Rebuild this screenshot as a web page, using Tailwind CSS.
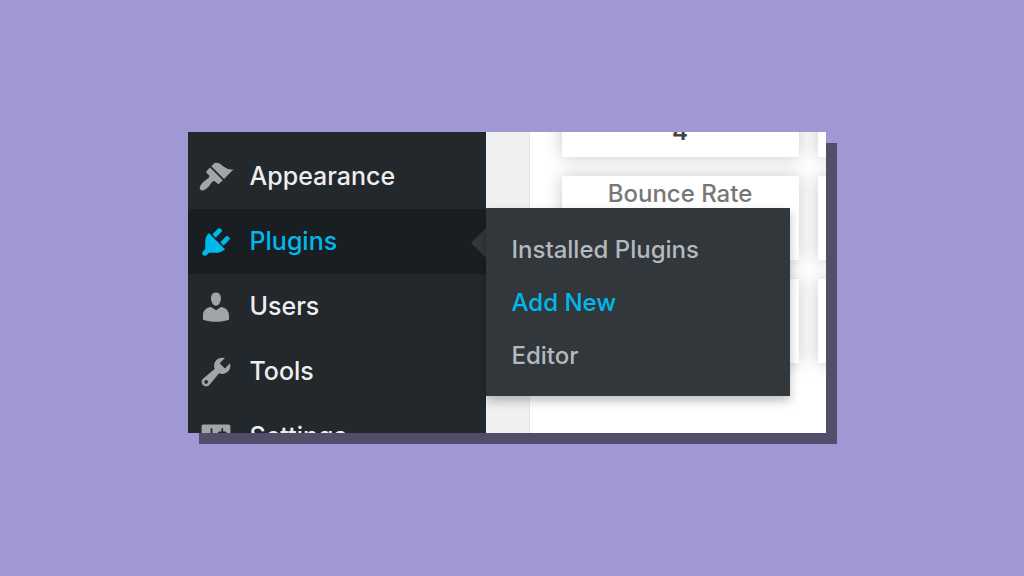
<!DOCTYPE html>
<html lang="en">
<head>
  <meta charset="UTF-8">
  <meta name="viewport" content="width=device-width, initial-scale=1.0">
  <title>Add New Plugin</title>
  <script src="https://cdn.jsdelivr.net/npm/@tailwindcss/browser@4"></script>
</head>
<body class="min-h-screen bg-[#a098d3] font-['Inter','Liberation_Sans',sans-serif] flex items-center justify-center">
  <!-- Cropped admin window with a hard shadow -->
  <div class="w-full max-w-[649px] pr-[11px] pb-[11px]">
    <div class="shadow-[11px_11px_0_#524d69]">
      <div class="flex h-[301px] overflow-hidden bg-[#f0f0f0]">

        <!-- Admin menu -->
        <nav class="relative z-10 w-[298px] shrink-0 bg-[#23282d] pt-3 text-[25px] font-medium text-[#eeeeee]">
          <ul>
            <li>
              <a href="#" class="flex h-[65px] items-center gap-4 pl-[10px]">
                <svg class="size-9 text-[#a0a5aa]" fill="currentColor" viewBox="0 0 20 20"><path d="M14.48 11.06L7.41 3.99l1.5-1.5c.5-.56 2.3-.47 3.51.32 1.21.8 1.43 1.28 2.91 2.1 1.18.64 2.45 1.26 4.45.85zm-.71.71L6.7 4.7 4.93 6.47c-.39.39-.39 1.02 0 1.41l1.06 1.06c.39.39.39 1.03 0 1.42-.6.6-1.43 1.11-2.21 1.69-.35.26-.7.53-1.01.84C1.43 14.23.4 16.08 1.4 17.07c.99 1 2.84-.03 4.18-1.36.31-.31.58-.66.85-1.02.57-.78 1.08-1.61 1.69-2.21.39-.39 1.02-.39 1.41 0l1.06 1.06c.39.39 1.02.39 1.41 0z"/></svg>
                Appearance
              </a>
            </li>
            <li class="relative">
              <a href="#" class="flex h-[65px] items-center gap-4 bg-[#191e23] pl-[10px] text-[#00b9eb]">
                <svg class="size-9" fill="currentColor" viewBox="0 0 20 20"><path d="M13.11 4.36L9.87 7.6 8 5.73l3.24-3.24c.35-.34 1.05-.2 1.56.32.52.51.66 1.21.31 1.55zm-8 1.77l.91-1.12 9.01 9.01-1.19.84c-.71.71-2.63 1.16-3.82 1.16H6.14L4.9 17.26c-.59.59-1.54.59-2.12 0-.59-.58-.59-1.53 0-2.12l1.24-1.24v-3.88c0-1.13.4-3.19 1.09-3.89zm7.26 3.97l3.24-3.24c.34-.35 1.04-.21 1.55.31.52.51.66 1.21.31 1.55l-3.24 3.25z"/></svg>
                Plugins
              </a>
              <svg class="absolute top-[19px] right-0 h-[30px] w-[15px] text-[#32373c]" fill="currentColor" viewBox="0 0 15 30"><path d="M15 0v30L0 15z"/></svg>
              <!-- Flyout -->
              <ul class="absolute -top-px left-full w-[304px] bg-[#32373c] pt-[15px] pb-[14px] text-2xl text-[#b4b9be] shadow-[0_5px_9px_rgba(0,0,0,0.25)]">
                <li><a href="#" class="flex h-[53px] items-center px-[26px]">Installed Plugins</a></li>
                <li><a href="#" class="flex h-[53px] items-center px-[26px] text-[#00b9eb]">Add New</a></li>
                <li><a href="#" class="flex h-[53px] items-center px-[26px]">Editor</a></li>
              </ul>
            </li>
            <li>
              <a href="#" class="flex h-[65px] items-center gap-4 pl-[10px]">
                <svg class="size-9 text-[#a0a5aa]" fill="currentColor" viewBox="0 0 20 20"><path d="M10 9.25c-2.27 0-2.73-3.44-2.73-3.44C7 4.02 7.82 2 9.97 2c2.16 0 2.98 2.02 2.71 3.81 0 0-.41 3.44-2.68 3.44zm0 2.57L12.72 10c2.39 0 4.52 2.33 4.52 4.53v2.49s-3.65 1.13-7.24 1.13c-3.65 0-7.24-1.13-7.24-1.13v-2.49c0-2.25 1.94-4.48 4.47-4.48z"/></svg>
                Users
              </a>
            </li>
            <li>
              <a href="#" class="flex h-[65px] items-center gap-4 pl-[10px]">
                <svg class="size-9 text-[#a0a5aa]" fill="currentColor" viewBox="0 0 20 20"><path d="M16.68 9.77c-1.34 1.34-3.3 1.67-4.95.99l-5.41 6.52c-.99.99-2.59.99-3.58 0s-.99-2.59 0-3.57l6.52-5.42c-.68-1.65-.35-3.61.99-4.95 1.28-1.28 3.12-1.62 4.72-1.06l-2.89 2.89 2.82 2.82 2.86-2.87c.53 1.58.18 3.39-1.08 4.65zM3.81 16.21c.4.39 1.04.39 1.43 0 .4-.4.4-1.04 0-1.43-.39-.4-1.03-.4-1.43 0-.39.39-.39 1.03 0 1.43z"/></svg>
                Tools
              </a>
            </li>
            <li>
              <a href="#" class="flex h-[65px] items-center gap-4 pl-[10px]">
                <svg class="size-9 text-[#a0a5aa]" fill="currentColor" viewBox="0 0 20 20"><path d="M18 16V4c0-.55-.45-1-1-1H3c-.55 0-1 .45-1 1v12c0 .55.45 1 1 1h14c.55 0 1-.45 1-1zM8 11h1c.55 0 1 .45 1 1s-.45 1-1 1H8v1.5c0 .28-.22.5-.5.5s-.5-.22-.5-.5V13H6c-.55 0-1-.45-1-1s.45-1 1-1h1V5.5c0-.28.22-.5.5-.5s.5.22.5.5V11zm5-2h-1c-.55 0-1-.45-1-1s.45-1 1-1h1V5.5c0-.28.22-.5.5-.5s.5.22.5.5V7h1c.55 0 1 .45 1 1s-.45 1-1 1h-1v5.5c0 .28-.22.5-.5.5s-.5-.22-.5-.5V9z"/></svg>
                Settings
              </a>
            </li>
          </ul>
        </nav>

        <!-- Stats widget, scrolled part way -->
        <main class="ml-[43px] min-w-0 flex-1 overflow-hidden border-l border-[#e5e5e5] bg-white pl-8">
          <div class="-mt-[59px] grid grid-cols-[237px_237px] gap-[19px] text-center text-2xl font-medium text-[#777777]">
            <div class="flex h-[84px] items-end justify-center bg-white pb-[9px] font-semibold text-[#444444] shadow-[0_0_16px_rgba(0,0,0,0.22)]">4</div>
            <div class="h-[84px] bg-white shadow-[0_0_16px_rgba(0,0,0,0.22)]"></div>
            <div class="h-[84px] bg-white pt-[2px] shadow-[0_0_16px_rgba(0,0,0,0.22)]">Bounce Rate</div>
            <div class="h-[84px] bg-white shadow-[0_0_16px_rgba(0,0,0,0.22)]"></div>
            <div class="h-[84px] bg-white shadow-[0_0_16px_rgba(0,0,0,0.22)]"></div>
            <div class="h-[84px] bg-white shadow-[0_0_16px_rgba(0,0,0,0.22)]"></div>
          </div>
        </main>

      </div>
    </div>
  </div>
</body>
</html>
